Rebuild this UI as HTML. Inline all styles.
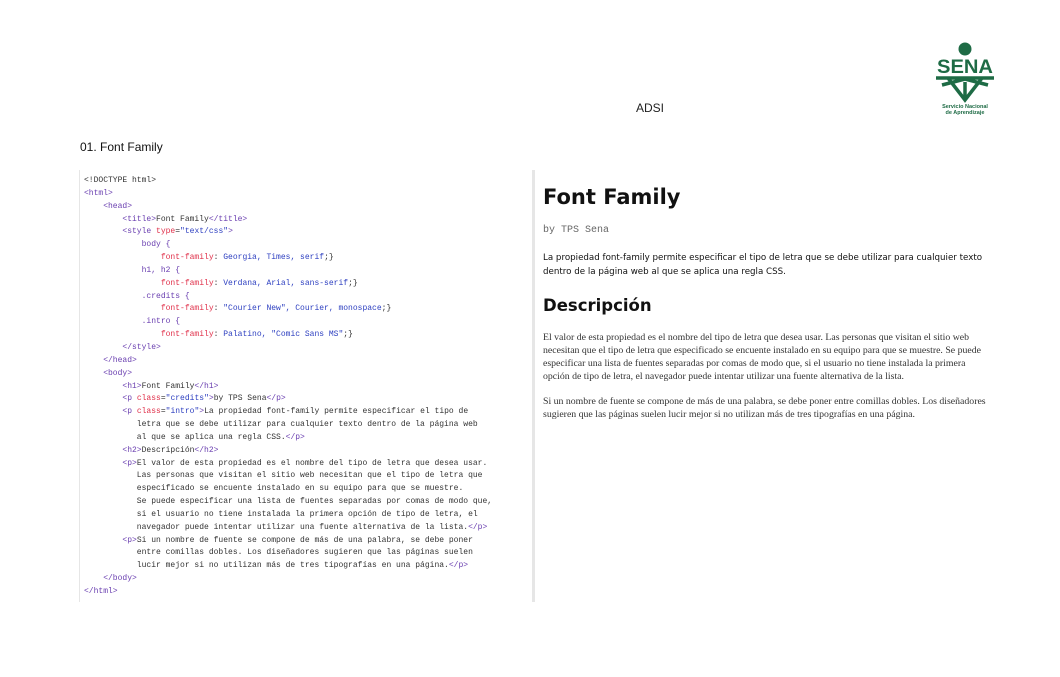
<!DOCTYPE html>
<html><head><meta charset="utf-8"><style>
body{margin:0;width:1060px;height:677px;background:#fff;position:relative;overflow:hidden;font-family:"Liberation Sans",sans-serif}
.a{position:absolute}
pre{margin:0;font-family:"Liberation Mono",monospace;font-size:8px;line-height:12.85px;color:#333}
.t{color:#6a3fb0}.r{color:#e0304a}.v{color:#2d3fc0}
.serif{font-family:"Liberation Serif",serif;font-size:9.8px;line-height:13px;color:#333}
</style></head><body>
<div class="a" style="left:636px;top:101px;font-size:12px;color:#222">ADSI</div>
<div class="a" style="left:80px;top:140px;font-size:12px;color:#111">01. Font Family</div>

<svg class="a" style="left:930px;top:38px" width="70" height="80" viewBox="0 0 70 80">
<circle cx="35" cy="11" r="6.5" fill="#1e6b45"/>
<text x="35" y="35" font-family="Liberation Sans" font-weight="bold" font-size="19" fill="#1e6b45" text-anchor="middle" textLength="56" lengthAdjust="spacingAndGlyphs">SENA</text>
<path d="M6 40 L64 40 M18 40 L35 62 L52 40 M35 44 L35 62 M12 47 L35 41 L58 47" stroke="#1e6b45" stroke-width="3.5" fill="none"/>
<text x="35" y="70" font-size="5.5" font-weight="bold" fill="#1e6b45" text-anchor="middle">Servicio Nacional</text>
<text x="35" y="76" font-size="5.5" font-weight="bold" fill="#1e6b45" text-anchor="middle">de Aprendizaje</text>
</svg>

<div class="a" style="left:79px;top:170px;width:452px;height:432px;border-left:1px solid #e6e6e6;border-right:1px solid #e6e6e6"></div>
<div class="a" style="left:532px;top:170px;width:3px;height:432px;background:#e6e6e6"></div>

<pre class="a" style="left:84px;top:175px">&lt;!DOCTYPE html&gt;
<span class="t">&lt;html&gt;</span>
    <span class="t">&lt;head&gt;</span>
        <span class="t">&lt;title&gt;</span>Font Family<span class="t">&lt;/title&gt;</span>
        <span class="t">&lt;style</span> <span class="r">type</span>=<span class="v">"text/css"</span><span class="t">&gt;</span>
            <span class="t">body {</span>
                <span class="r">font-family</span>: <span class="v">Georgia, Times, serif</span>;}
            <span class="t">h1, h2 {</span>
                <span class="r">font-family</span>: <span class="v">Verdana, Arial, sans-serif</span>;}
            <span class="t">.credits {</span>
                <span class="r">font-family</span>: <span class="v">"Courier New", Courier, monospace</span>;}
            <span class="t">.intro {</span>
                <span class="r">font-family</span>: <span class="v">Palatino, "Comic Sans MS"</span>;}
        <span class="t">&lt;/style&gt;</span>
    <span class="t">&lt;/head&gt;</span>
    <span class="t">&lt;body&gt;</span>
        <span class="t">&lt;h1&gt;</span>Font Family<span class="t">&lt;/h1&gt;</span>
        <span class="t">&lt;p</span> <span class="r">class</span>=<span class="v">"credits"</span><span class="t">&gt;</span>by TPS Sena<span class="t">&lt;/p&gt;</span>
        <span class="t">&lt;p</span> <span class="r">class</span>=<span class="v">"intro"</span><span class="t">&gt;</span>La propiedad font-family permite especificar el tipo de
           letra que se debe utilizar para cualquier texto dentro de la página web
           al que se aplica una regla CSS.<span class="t">&lt;/p&gt;</span>
        <span class="t">&lt;h2&gt;</span>Descripción<span class="t">&lt;/h2&gt;</span>
        <span class="t">&lt;p&gt;</span>El valor de esta propiedad es el nombre del tipo de letra que desea usar.
           Las personas que visitan el sitio web necesitan que el tipo de letra que
           especificado se encuente instalado en su equipo para que se muestre.
           Se puede especificar una lista de fuentes separadas por comas de modo que,
           si el usuario no tiene instalada la primera opción de tipo de letra, el
           navegador puede intentar utilizar una fuente alternativa de la lista.<span class="t">&lt;/p&gt;</span>
        <span class="t">&lt;p&gt;</span>Si un nombre de fuente se compone de más de una palabra, se debe poner
           entre comillas dobles. Los diseñadores sugieren que las páginas suelen
           lucir mejor si no utilizan más de tres tipografías en una página.<span class="t">&lt;/p&gt;</span>
    <span class="t">&lt;/body&gt;</span>
<span class="t">&lt;/html&gt;</span></pre>

<div class="a" style="left:543px;top:185px;font-family:'DejaVu Sans',sans-serif;font-weight:bold;font-size:21px;color:#111">Font Family</div>
<div class="a" style="left:543px;top:225px;font-family:'Liberation Mono',monospace;font-size:10px;color:#666">by TPS Sena</div>
<div class="a" style="left:543px;top:251px;width:445px;font-family:'DejaVu Sans',sans-serif;font-size:8.7px;line-height:14px;color:#111">La propiedad font-family permite especificar el tipo de letra que se debe utilizar para cualquier texto dentro de la página web al que se aplica una regla CSS.</div>
<div class="a" style="left:543px;top:296px;font-family:'DejaVu Sans',sans-serif;font-weight:bold;font-size:16.5px;color:#111">Descripción</div>
<div class="a serif" style="left:543px;top:331px;width:448px">El valor de esta propiedad es el nombre del tipo de letra que desea usar. Las personas que visitan el sitio web necesitan que el tipo de letra que especificado se encuente instalado en su equipo para que se muestre. Se puede especificar una lista de fuentes separadas por comas de modo que, si el usuario no tiene instalada la primera opción de tipo de letra, el navegador puede intentar utilizar una fuente alternativa de la lista.</div>
<div class="a serif" style="left:543px;top:395px;width:448px">Si un nombre de fuente se compone de más de una palabra, se debe poner entre comillas dobles. Los diseñadores sugieren que las páginas suelen lucir mejor si no utilizan más de tres tipografías en una página.</div>
</body></html>
